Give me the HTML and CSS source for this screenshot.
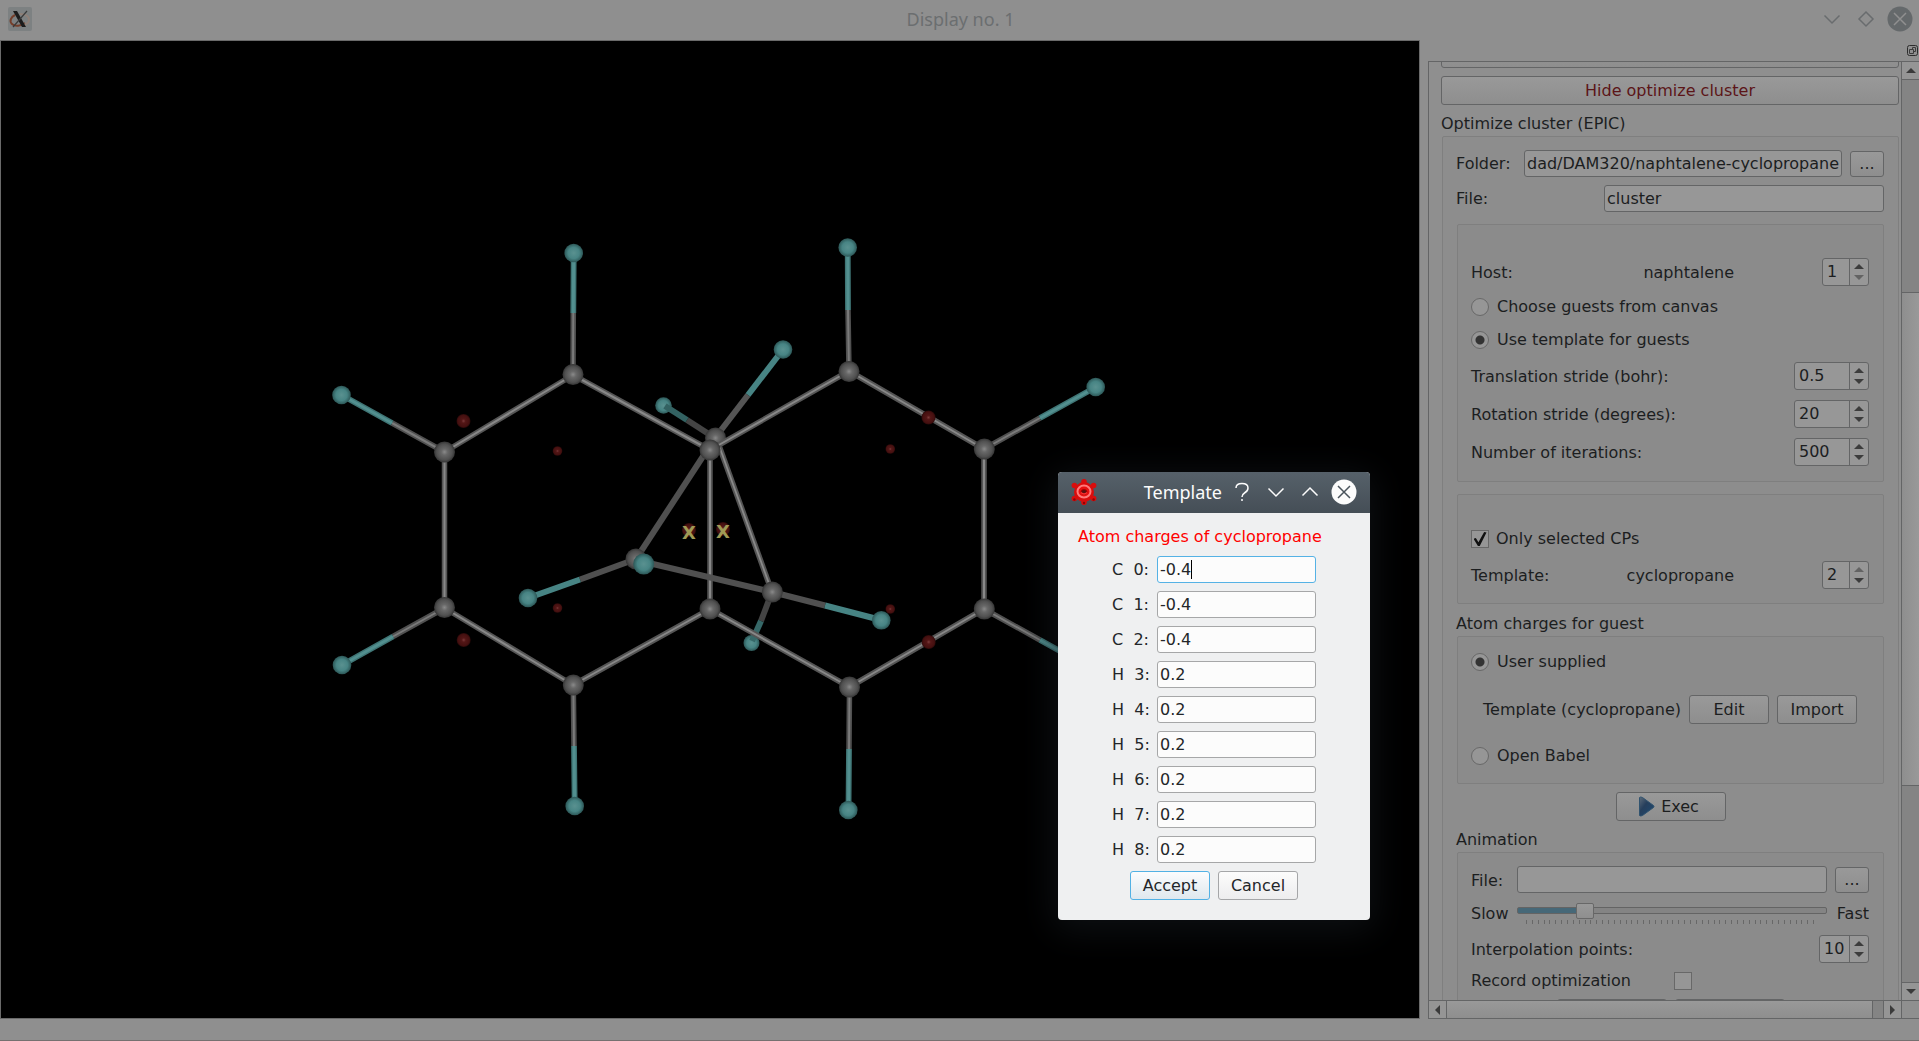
FILE: index.html
```html
<!DOCTYPE html>
<html lang="en">
<head>
<meta charset="utf-8">
<title>Display no. 1</title>
<link rel="stylesheet" href="styles.css">
</head>
<body>
<div class="window">
  <header class="titlebar">
    <svg class="app-icon" width="24" height="24" viewBox="0 0 24 24" aria-hidden="true">
      <rect width="24" height="24" rx="2" fill="#7d8182"/>
      <path d="M7 8C3 10 1 14 4 17c3 3 9 2 13-1" fill="none" stroke="#743e2a" stroke-width="2"/>
      <path d="M12 7c5 0 9 2 9 6 0 2-2 4-5 5" fill="none" stroke="#8f8078" stroke-width="2"/>
      <path d="M5 4h4l9 16h-4z" fill="#1c1c1c"/>
      <path d="M19 4 5 20" stroke="#3a3a3a" stroke-width="1.200"/>
    </svg>
    <h1 class="titlebar-text">Display no. 1</h1>
    <div class="titlebar-buttons">
      <button class="win-btn" aria-label="Minimize"><svg width="26" height="26" viewBox="0 0 26 26"><path d="m5.500 9.500 7.500 7.500 7.500-7.500" fill="none" stroke="#696c6e" stroke-width="1.500"/></svg></button>
      <button class="win-btn" aria-label="Restore"><svg width="26" height="26" viewBox="0 0 26 26"><path d="m13 6 7 7-7 7-7-7z" fill="none" stroke="#696c6e" stroke-width="1.500"/></svg></button>
      <button class="win-btn" aria-label="Close"><svg width="26" height="26" viewBox="0 0 26 26"><circle cx="13" cy="13" r="12.500" fill="#65696b"/><path d="m7 7 12 12M19 7 7 19" stroke="#909090" stroke-width="1.500"/></svg></button>
    </div>
  </header>

  <main class="main">
    <section class="canvas" aria-label="Molecule view">
      <svg class="molecule" viewBox="1 41 1418 977" preserveAspectRatio="xMidYMid meet">
        <defs>
          <radialGradient id="gc"><stop offset="0" stop-color="#8a8a8a"/><stop offset=".3" stop-color="#686868"/><stop offset=".75" stop-color="#505050"/><stop offset="1" stop-color="#343434"/></radialGradient>
          <radialGradient id="gh"><stop offset="0" stop-color="#5a9190"/><stop offset=".6" stop-color="#478484"/><stop offset="1" stop-color="#2c5656"/></radialGradient>
          <radialGradient id="gr"><stop offset="0" stop-color="#7a3a3a"/><stop offset=".3" stop-color="#531616"/><stop offset=".8" stop-color="#451010"/><stop offset="1" stop-color="#2a0808"/></radialGradient>
          <circle id="c" r="10.500" fill="url(#gc)"/>
          <circle id="h" r="9.300" fill="url(#gh)"/>
          <circle id="r" r="7" fill="url(#gr)"/>
          <circle id="s" r="4.800" fill="url(#gr)"/>
          <path id="ring" d="M573 375 444.500 452V608L573 685 710 609V450ZM710 450 849 371 984 449V609L849.500 687 710 609"/>
          <path id="cbonds" d="M573 375 573.300 313M444.500 452 392 423M849 371 848 310M984 449 1040 418M984 609 1040 640M849.500 687 849 749M573.300 685 574 746M444.500 608 393 636.500"/>
          <path id="hbonds" d="M573.300 313 573.700 253M392 423 341.500 395M848 310 847.700 247.500M1040 418 1096 387M1040 640 1096 671M849 749 848.500 810M574 746 574.700 806M393 636.500 342 665"/>
        </defs>
        <g fill="none" stroke-width="6">
          <path d="M687 420 715 438" stroke="#444"/>
          <path d="M715 438 748 395" stroke="#555"/>
          <path d="M748 395 783 349.500" stroke="#478484"/>
          <path d="M715 438 636 559" stroke="#505050"/>
          <path d="M636 559 580 579.500" stroke="#505050"/>
          <path d="M717 440 772 592" stroke="#555" stroke-width="5.500"/>
          <path d="M717 440 772 592" stroke="#8a8a8a" stroke-width="1.800"/>
          <path d="M772 592 761 621" stroke="#444"/>
        </g>
        <use href="#h" x="783" y="349.500"/>
        <circle cx="663.500" cy="405.500" r="8.300" fill="url(#gh)"/>
        <path d="M665 406 687 420" stroke="#336262" stroke-width="6"/>
        <use href="#c" x="715.500" y="438"/>
        <circle cx="751.500" cy="643" r="8" fill="url(#gh)"/>
        <path d="M752 641 761 621" stroke="#366868" stroke-width="6"/>
        <use href="#r" x="689" y="530"/><use href="#r" x="723" y="529"/>
        <g fill="none" stroke-linejoin="round">
          <use href="#ring" stroke="#555" stroke-width="5.500"/><use href="#ring" stroke="#888" stroke-width="2"/>
          <use href="#cbonds" stroke="#505050" stroke-width="5.500"/><use href="#cbonds" stroke="#7a7a7a" stroke-width="2"/>
          <use href="#hbonds" stroke="#3f7575" stroke-width="5.800"/><use href="#hbonds" stroke="#528f8f" stroke-width="3"/>
        </g>
        <g fill="none" stroke-width="6">
          <path d="M636 560 772 592 825 605.500" stroke="#505050"/>
          <path d="M825 605.500 881 620" stroke="#478484"/>
          <path d="M580 579.500 528 598" stroke="#478484"/>
        </g>
        <use href="#c" x="636" y="559"/><use href="#c" x="772.300" y="592"/>
        <use href="#c" x="573" y="374.500"/><use href="#c" x="444.500" y="452"/><use href="#c" x="710" y="450"/><use href="#c" x="849" y="371.500"/><use href="#c" x="984.300" y="449"/>
        <use href="#c" x="984.300" y="609"/><use href="#c" x="849.500" y="687"/><use href="#c" x="710" y="609"/><use href="#c" x="573.300" y="685"/><use href="#c" x="444.500" y="607.500"/>
        <use href="#h" x="573.700" y="253"/><use href="#h" x="341.500" y="395"/><use href="#h" x="847.700" y="247.500"/><use href="#h" x="1095.700" y="387"/><use href="#h" x="1096" y="671"/>
        <use href="#h" x="848.300" y="810"/><use href="#h" x="574.700" y="806"/><use href="#h" x="342" y="665"/><use href="#h" x="528" y="598"/>
        <circle cx="643.700" cy="564" r="10.500" fill="url(#gh)"/>
        <use href="#r" x="463.500" y="421"/><use href="#r" x="463.700" y="640"/><use href="#r" x="928.500" y="417.500"/><use href="#r" x="928.700" y="642"/>
        <use href="#s" x="557.500" y="451"/><use href="#s" x="557.500" y="608"/><use href="#s" x="890.300" y="449"/><use href="#s" x="890.300" y="609"/>
        <use href="#h" x="881.300" y="620.300"/>
        <text class="marker" x="689" y="539">X</text>
        <text class="marker" x="723" y="538">X</text>
      </svg>
    </section>

    <aside class="dock">
      <div class="dock-title">
        <button class="dock-float" aria-label="Float panel"><svg width="12" height="12" viewBox="0 0 12 12"><rect x=".5" y=".5" width="10" height="10" rx="2" fill="none" stroke="#2c2c2c"/><path d="M5.500 4.500v-2h3v4h-2M2.500 4.500h4v4h-4z" fill="none" stroke="#3c3c3c"/></svg></button>
      </div>
      <div class="scroll-area">
        <div class="viewport">
          <button class="push wide previous" aria-label="Previous section"></button>
          <button class="push wide danger">Hide optimize cluster</button>
          <h2 class="group-title">Optimize cluster (EPIC)</h2>
          <div class="group outer">
            <div class="row folder-row">
              <label class="folder-label" for="folder">Folder:</label>
              <input class="field grow" id="folder" type="text" value="dad/DAM320/naphtalene-cyclopropane">
              <button class="push tool">...</button>
            </div>
            <div class="row file-row">
              <label class="grow" for="file">File:</label>
              <input class="field file-field" id="file" type="text" value="cluster">
            </div>

            <section class="group inner host-group">
              <div class="row host-row">
                <label for="host">Host:</label>
                <span class="molecule-name">naphtalene</span>
                <span class="spin small"><input id="host" type="text" value="1"><span class="arrows"><button class="up" aria-label="Increase host"></button><button class="down off" aria-label="Decrease host"></button></span></span>
              </div>
              <label class="option"><input type="radio" name="guests">Choose guests from canvas</label>
              <label class="option"><input type="radio" name="guests" checked>Use template for guests</label>
              <div class="row spin-row first"><label for="trans">Translation stride (bohr):</label><span class="spin large"><input id="trans" type="text" value="0.5"><span class="arrows"><button class="up" aria-label="Increase translation"></button><button class="down" aria-label="Decrease translation"></button></span></span></div>
              <div class="row spin-row"><label for="rot">Rotation stride (degrees):</label><span class="spin large"><input id="rot" type="text" value="20"><span class="arrows"><button class="up" aria-label="Increase rotation"></button><button class="down" aria-label="Decrease rotation"></button></span></span></div>
              <div class="row spin-row"><label for="iter">Number of iterations:</label><span class="spin large"><input id="iter" type="text" value="500"><span class="arrows"><button class="up" aria-label="Increase iterations"></button><button class="down" aria-label="Decrease iterations"></button></span></span></div>
            </section>

            <section class="group inner template-group">
              <label class="option check"><input type="checkbox" checked>Only selected CPs</label>
              <div class="row host-row">
                <label for="tmpl">Template:</label>
                <span class="molecule-name">cyclopropane</span>
                <span class="spin small"><input id="tmpl" type="text" value="2"><span class="arrows"><button class="up off" aria-label="Increase template"></button><button class="down" aria-label="Decrease template"></button></span></span>
              </div>
            </section>

            <h3 class="group-title">Atom charges for guest</h3>
            <section class="group inner charges-group">
              <label class="option"><input type="radio" name="charges" checked>User supplied</label>
              <div class="row charges-row">
                <span>Template (cyclopropane)</span>
                <button class="push std">Edit</button>
                <button class="push std">Import</button>
              </div>
              <label class="option"><input type="radio" name="charges">Open Babel</label>
            </section>

            <button class="push exec"><svg width="17" height="21" viewBox="0 0 17 21" aria-hidden="true"><defs><linearGradient id="ex" x2="1" y2="1"><stop offset="0" stop-color="#5d6b7a"/><stop offset=".4" stop-color="#263f5c"/><stop offset="1" stop-color="#1f4a72"/></linearGradient></defs><path d="M1.500 1.500q1-1 3 0l11 8q1 1 0 2l-11 8q-2 1-3 0z" fill="url(#ex)" stroke="#30536f"/></svg>Exec</button>

            <h3 class="group-title">Animation</h3>
            <section class="group inner animation-group">
              <div class="row anim-file">
                <label for="afile">File:</label>
                <input class="field grow" id="afile" type="text">
                <button class="push tool">...</button>
              </div>
              <div class="row speed-row">
                <label for="speed">Slow</label>
                <div class="slider"><input id="speed" type="range" min="0" max="50" value="10"><div class="ticks"></div></div>
                <span class="fast">Fast</span>
              </div>
              <div class="row interp-row"><label for="interp">Interpolation points:</label><span class="spin medium"><input id="interp" type="text" value="10"><span class="arrows"><button class="up" aria-label="Increase points"></button><button class="down" aria-label="Decrease points"></button></span></span></div>
              <label class="option record"><span>Record optimization</span><input type="checkbox"></label>
              <div class="row next-buttons"><button class="push half" aria-label="Start"></button><button class="push half" aria-label="Stop"></button></div>
            </section>
          </div>
        </div>
        <div class="vbar">
          <button class="bar-btn" aria-label="Scroll up"><i class="tri-up"></i></button>
          <div class="vspace"></div>
          <div class="vthumb"></div>
          <div class="vrest"></div>
          <button class="bar-btn" aria-label="Scroll down"><i class="tri-down"></i></button>
        </div>
        <div class="hbar">
          <button class="bar-btn" aria-label="Scroll left"><i class="tri-left"></i></button>
          <div class="hthumb"></div>
          <div class="hrest"></div>
          <button class="bar-btn" aria-label="Scroll right"><i class="tri-right"></i></button>
        </div>
        <div class="corner"></div>
      </div>
    </aside>
  </main>
  <footer class="statusbar"></footer>
</div>

<section class="dialog" role="dialog" aria-labelledby="dialog-title">
  <header class="dialog-bar">
    <svg class="cog" width="26" height="26" viewBox="0 0 26 26" aria-hidden="true">
      <g fill="#d80d0d"><circle cx="13" cy="13" r="10"/><circle cx="13" cy="2.800" r="2.800"/><circle cx="13" cy="23.200" r="2.800"/><circle cx="3.400" cy="6.500" r="2.800"/><circle cx="22.600" cy="6.500" r="2.800"/><circle cx="3.400" cy="19.500" r="2.800"/><circle cx="22.600" cy="19.500" r="2.800"/></g>
      <g fill="#8c0606"><circle cx="3.400" cy="20.500" r="1.200"/><circle cx="22.600" cy="20.500" r="1.200"/><circle cx="13" cy="24" r="1.200"/></g>
      <ellipse cx="13" cy="12.500" rx="6.500" ry="6" fill="#e61010" stroke="#ff7a7a" stroke-width="2"/>
      <ellipse cx="13" cy="13" rx="3" ry="2.500" fill="#5a1010" stroke="#a80000"/>
      <path d="M10 13.500q3 3 6 0" stroke="#ff3030" stroke-width="1.500" fill="none"/>
    </svg>
    <h2 class="dialog-title" id="dialog-title">Template</h2>
    <div class="dialog-buttons">
      <button class="win-btn" aria-label="Help"><svg width="26" height="26" viewBox="0 0 26 26"><path d="M7 9q0-4.500 6-4.500t6 4.500q0 3-3.500 5Q13 15.500 13 18M13 20v2" fill="none" stroke="#fcfcfc" stroke-width="1.500"/></svg></button>
      <button class="win-btn" aria-label="Minimize"><svg width="26" height="26" viewBox="0 0 26 26"><path d="m5.500 9.500 7.500 7.500 7.500-7.500" fill="none" stroke="#fcfcfc" stroke-width="1.500"/></svg></button>
      <button class="win-btn" aria-label="Maximize"><svg width="26" height="26" viewBox="0 0 26 26"><path d="m5.500 16.500 7.500-7.500 7.500 7.500" fill="none" stroke="#fcfcfc" stroke-width="1.500"/></svg></button>
      <button class="win-btn" aria-label="Close"><svg width="26" height="26" viewBox="0 0 26 26"><circle cx="13" cy="13" r="12.500" fill="#fcfcfc"/><path d="m7 7 12 12M19 7 7 19" stroke="#4a545c" stroke-width="1.500"/></svg></button>
    </div>
  </header>
  <form class="dialog-body">
    <p class="dialog-heading">Atom charges of cyclopropane</p>
    <div class="charge"><label for="q0">C  0:</label><span class="caret-wrap"><input class="field light focused" id="q0" type="text" value="-0.4"><i class="caret"></i></span></div>
    <div class="charge"><label for="q1">C  1:</label><input class="field light" id="q1" type="text" value="-0.4"></div>
    <div class="charge"><label for="q2">C  2:</label><input class="field light" id="q2" type="text" value="-0.4"></div>
    <div class="charge"><label for="q3">H  3:</label><input class="field light" id="q3" type="text" value="0.2"></div>
    <div class="charge"><label for="q4">H  4:</label><input class="field light" id="q4" type="text" value="0.2"></div>
    <div class="charge"><label for="q5">H  5:</label><input class="field light" id="q5" type="text" value="0.2"></div>
    <div class="charge"><label for="q6">H  6:</label><input class="field light" id="q6" type="text" value="0.2"></div>
    <div class="charge"><label for="q7">H  7:</label><input class="field light" id="q7" type="text" value="0.2"></div>
    <div class="charge"><label for="q8">H  8:</label><input class="field light" id="q8" type="text" value="0.2"></div>
    <div class="dialog-actions">
      <button type="button" class="push std bright default">Accept</button>
      <button type="button" class="push std bright">Cancel</button>
    </div>
  </form>
</section>
</body>
</html>
```
FILE: styles.css
```css
*, *::before, *::after { box-sizing: border-box; }

:root {
  --window: #8f8f8f;
  --edge: #646566;
  --soft-edge: #7f7f7f;
  --text: #1c1e1f;
}

html, body { height: 100%; }
body {
  margin: 0;
  overflow: hidden;
  background: var(--window);
  color: var(--text);
  font: 16px/20px "DejaVu Sans", Verdana, sans-serif;
}
h1, h2, h3, p { margin: 0; font-size: inherit; font-weight: normal; }
button, input { font: inherit; color: inherit; margin: 0; padding: 0; }
button { border: 0; background: none; }
svg { display: block; }

.window { display: flex; flex-direction: column; height: 100vh; }

/* Main window title bar */
.titlebar {
  display: grid;
  grid-template-columns: 1fr auto 1fr;
  align-items: center;
  height: 40px;
  padding: 0 6px 2px 8px;
}
.titlebar-text { font: 18px/24px "Noto Sans", sans-serif; color: #6b6e70; }
.titlebar-buttons { display: flex; gap: 8px; justify-self: end; }
.win-btn { width: 26px; height: 26px; }

.main { display: flex; flex: 1; min-height: 0; }
.canvas {
  flex: 1;
  min-width: 0;
  border: 1px solid #6a6a6a;
  background: #000;
}
.molecule { width: 100%; height: 100%; }
.marker {
  font: bold 18px "DejaVu Sans", sans-serif;
  text-anchor: middle;
  fill: #a09a55;
}
.statusbar { height: 22px; border-bottom: 1px solid #757070; }

/* Dock */
.dock { display: flex; flex-direction: column; width: 491px; margin-left: 8px; }
.dock-title { display: flex; justify-content: flex-end; align-items: flex-end; height: 21px; padding: 0 0 4px; }
.dock-float { height: 12px; }
.scroll-area {
  display: grid;
  grid-template: minmax(0, 1fr) 18px / minmax(0, 1fr) 18px;
  flex: 1;
  min-height: 0;
  border: solid var(--edge);
  border-width: 1px 0 1px 1px;
}
.viewport {
  display: flex;
  flex-direction: column;
  overflow: hidden;
  padding: 0 2px 0 12px;
}
.viewport > * { flex-shrink: 0; }

.group { border: 1px solid var(--soft-edge); border-radius: 2px; }
.group-title { padding-top: 2px; line-height: 18px; }
.outer {
  display: flex;
  flex-direction: column;
  margin: 3px 0 0 1px;
  padding: 13px 14px 0;
  background: #8d8d8d;
}
.inner { padding: 0 14px 0 13px; background: #8b8b8b; }
.outer > .group-title { margin: 9px 0 3px -1px; }

.row { display: flex; align-items: center; }
.grow { flex: 1; min-width: 0; }
.inner > .row > label, .molecule-name, .fast { padding-top: 2px; }

/* Buttons */
.push {
  height: 29px;
  border: 1px solid var(--edge);
  border-radius: 3px;
  background: linear-gradient(#999, #8e8e8e);
}
.push.wide { width: 100%; }
.push.previous { margin-top: -23px; }
.push.danger { margin: 8px 0; color: #5c1518; }
.push.tool { width: 34px; height: 26px; }
.push.std { width: 80px; }
.push.half { width: 110px; }
.push.bright { border-color: #a5a6a8; background: linear-gradient(#fcfcfc, #ededee); }
.push.default { border-color: #52b1e4; background: linear-gradient(#fbfcfd, #dfe8ee); }
.push.exec {
  display: flex;
  align-items: center;
  justify-content: center;
  align-self: center;
  gap: 6px;
  width: 110px;
  margin-top: 8px;
  padding-right: 4px;
}

/* Text fields */
.field {
  height: 27px;
  padding: 0 2px;
  border: 1px solid var(--edge);
  border-radius: 3px;
  background: #979797;
}
.folder-row { gap: 8px; }
.folder-label { width: 60px; margin-left: -1px; }
.file-row { margin: 8px 0 12px; }
.file-row label { margin-left: -1px; }
.file-field { width: 280px; }

/* Spin boxes */
.spin {
  display: flex;
  height: 28px;
  border: 1px solid var(--edge);
  border-radius: 3px;
  background: #979797;
}
.spin input { flex: 1; min-width: 0; border: 0; background: none; padding-left: 4px; }
.spin.small { width: 47px; }
.spin.medium { width: 50px; }
.spin.large { width: 75px; }
.arrows {
  display: flex;
  flex-direction: column;
  justify-content: center;
  align-items: center;
  gap: 6px;
  width: 19px;
  border-left: 1px solid var(--edge);
}
.up, .down { border: 5px solid transparent; width: 0; height: 0; }
.up { border-top: 0; border-bottom-color: #3c3c3c; }
.down { border-bottom: 0; border-top-color: #3c3c3c; }
.up.off { border-bottom-color: #636363; }
.down.off { border-top-color: #636363; }

.host-group { padding-top: 33px; padding-bottom: 15px; }
.host-row { justify-content: space-between; }
.host-row label { width: 100px; }
.molecule-name { flex: 1; text-align: right; margin-right: 88px; }
.spin-row { justify-content: space-between; margin-top: 10px; }
.spin-row.first { margin-top: 12px; }

/* Radio buttons and tick boxes */
.option { display: flex; align-items: center; gap: 8px; height: 20px; }
.option input { appearance: none; width: 18px; height: 18px; border: 1px solid #686868; background: #969696; }
.option input[type="radio"] { border-radius: 50%; }
.option input[type="radio"]:checked { background: radial-gradient(circle, #333 0 4px, #969696 5px); }
.host-group .option { margin-top: 11px; }
.host-group .option + .option { margin-top: 13px; }
.option.check { margin-bottom: 12px; gap: 7px; }
.option.check input { display: grid; place-items: center; }
.option.check input::before {
  content: "";
  width: 13px;
  height: 14px;
  background: #111;
  clip-path: polygon(0 48%, 18% 42%, 38% 74%, 82% 0, 100% 4%, 48% 100%, 34% 100%);
}
.template-group { margin-top: 12px; padding-top: 34px; padding-bottom: 14px; }

.charges-group { padding-top: 15px; padding-bottom: 17px; }
.charges-row { gap: 8px; padding-left: 12px; margin: 23px 0 22px; }

/* Animation */
.outer > .exec + .group-title { margin-top: 8px; }
.animation-group { padding-top: 13px; }
.anim-file { gap: 8px; }
.anim-file label { width: 38px; }
.speed-row { height: 40px; }
.speed-row label { width: 46px; }
.fast { width: 42px; text-align: right; }
.slider { flex: 1; }
.slider input { display: block; appearance: none; width: 100%; height: 16px; background: none; }
.slider input::-webkit-slider-runnable-track {
  height: 7px;
  border: 1px solid #646464;
  border-radius: 2px;
  background: linear-gradient(to right, #466878 0 20%, #848484 20%);
}
.slider input::-webkit-slider-thumb {
  appearance: none;
  width: 18px;
  height: 16px;
  margin-top: -5px;
  border: 1px solid #686868;
  border-radius: 2px;
  background: linear-gradient(#999, #8f8f8f);
}
.ticks {
  height: 4px;
  margin: 2px 8px 0 9px;
  background: repeating-linear-gradient(to right, #686868 0 1px, transparent 1px 2%);
}
.interp-row { justify-content: space-between; margin-top: 2px; }
.option.record { margin-top: 8px; gap: 0; }
.record span { width: 203px; }
.next-buttons { gap: 8px; margin: 8px 0 8px 86px; }

/* Scroll bars */
.bar-btn { display: grid; place-items: center; width: 17px; height: 17px; background: #959595; }
.vbar { display: flex; flex-direction: column; border-left: 1px solid var(--edge); background: #848484; }
.vbar > :first-child { border-bottom: 1px solid var(--edge); height: 18px; }
.vbar > :last-child { border-top: 1px solid var(--edge); height: 18px; }
.vspace { flex: 213; }
.vthumb { flex: 493; border: solid var(--edge); border-width: 1px 0; background: linear-gradient(to right, #8e8e8e, #999); }
.vrest { flex: 197; }
.hbar { display: flex; border-top: 1px solid var(--edge); background: #848484; }
.hbar > :first-child { border-right: 1px solid var(--edge); width: 18px; }
.hbar > :last-child { border-left: 1px solid var(--edge); width: 18px; }
.hthumb { flex: 427; border-right: 1px solid var(--edge); background: linear-gradient(#999, #8e8e8e); }
.hrest { flex: 10; }
.corner { border: solid var(--edge); border-width: 1px 0 0 1px; }
.bar-btn i { border: 5px solid transparent; }
.bar-btn .tri-up { border-top-width: 0; border-bottom-color: #3a3a3a; }
.bar-btn .tri-down { border-bottom-width: 0; border-top-color: #3a3a3a; }
.bar-btn .tri-left { border-left-width: 0; border-right-color: #3a3a3a; }
.bar-btn .tri-right { border-right-width: 0; border-left-color: #3a3a3a; }

/* Floating dialog */
.dialog {
  position: absolute;
  top: 472px;
  right: 549px;
  width: 312px;
  border-radius: 4px;
  background: #eff0f1;
  color: #232629;
  box-shadow: 0 6px 36px 4px rgba(24, 29, 33, .6);
}
.dialog-bar {
  display: flex;
  align-items: center;
  height: 41px;
  padding: 0 13px 2px;
  border-radius: 4px 4px 0 0;
  background: linear-gradient(#56616a, #454e56);
  color: #fcfcfc;
}
.dialog-title { flex: 1; padding-right: 7px; text-align: right; font: 18px/24px "Noto Sans", sans-serif; }
.dialog-buttons { display: flex; gap: 8px; }
.dialog-body { display: flex; flex-direction: column; gap: 8px; padding: 14px 20px 20px; }
.dialog-heading { margin-bottom: 1px; color: #f00; }
.charge { display: flex; align-items: center; gap: 8px; padding-left: 34px; }
.charge label { width: 37px; text-align: right; white-space: pre; }
.field.light { width: 159px; border-color: #a6a7a8; background: #fcfcfc; }
.field.light.focused { border-color: #55b2e5; outline: 0; }
.caret-wrap { position: relative; display: flex; }
.caret { position: absolute; left: 34px; top: 4px; width: 1px; height: 19px; background: #000; }
.dialog-actions { display: flex; gap: 8px; padding-left: 52px; }
```
